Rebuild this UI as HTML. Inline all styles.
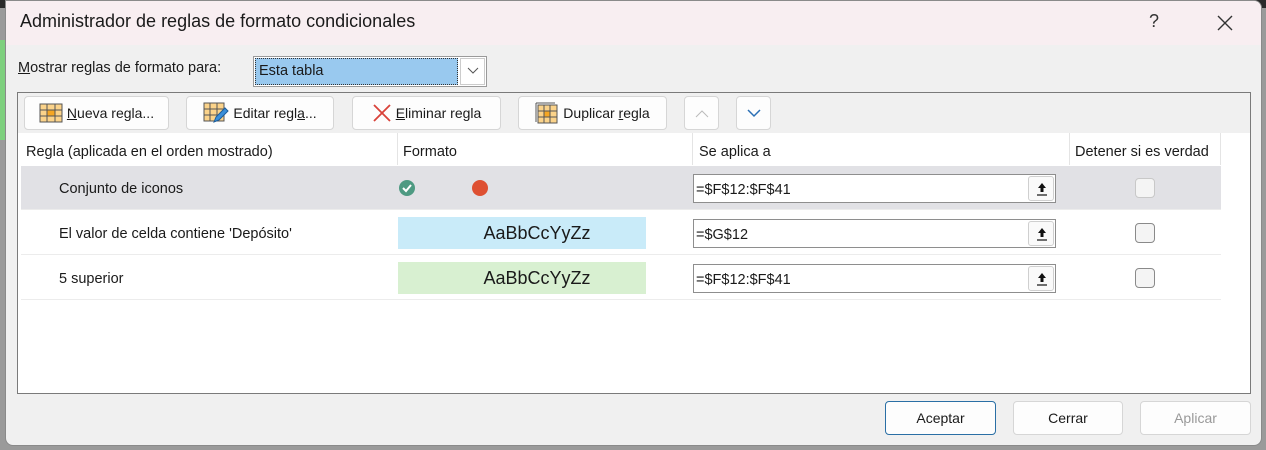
<!DOCTYPE html>
<html><head><meta charset="utf-8"><style>
*{box-sizing:border-box;margin:0;padding:0}
body{width:1266px;height:450px;overflow:hidden;background:#9a9a9a;font-family:"Liberation Sans",sans-serif;font-size:14px;color:#1a1a1a;position:relative}
.a{position:absolute}
.dlg{left:5px;top:0;width:1257px;height:446px;background:#f0f0f0;border:1px solid #8a8a8a;border-radius:0 8px 8px 8px;overflow:hidden}
.title{left:0;top:0;width:100%;height:44px;background:#f8eef1}
.btn{position:absolute;background:#fdfdfd;border:1px solid #d6d6d6;border-radius:4px;display:flex;align-items:center;justify-content:center;gap:4px;font-size:14px}
.row{position:absolute;left:3px;width:1200px;height:44px;border-bottom:1px solid #ececec}
.cell{position:absolute;top:1px;line-height:44px}
.inp{position:absolute;left:672px;top:8px;width:363px;height:29px;background:#fff;border:1px solid #8e8e8e;font-size:14.5px;line-height:30px;padding-left:2px}
.up{position:absolute;right:1px;top:1px;width:26px;height:25px;border:1px solid #cfcfcf;border-radius:3px;background:#fafafa}
.up svg{position:absolute;left:7px;top:5px}
.cb{position:absolute;left:1114px;top:12px;width:20px;height:20px;border:1px solid #8a8a8a;border-radius:4px;background:#f4f4f4}
.sw{position:absolute;left:377px;top:6px;width:248px;height:32px;font-size:18px;text-align:center;line-height:32px;padding-left:30px}
u{text-decoration:underline}
</style></head><body>
<div class="a" style="left:0;top:0;width:1266px;height:8px;background:#2a2a2a"></div>
<div class="a" style="left:0;top:40px;width:5px;height:100px;background:#7ed07e"></div>
<div class="a dlg">
 <div class="a title"></div>
 <div class="a" style="left:14px;top:10px;font-size:18px">Administrador de reglas de formato condicionales</div>
 <div class="a" style="left:1143px;top:10px;font-size:18px;color:#333">?</div>
 <svg class="a" style="left:1210px;top:13px" width="18" height="18"><path d="M2 2L16 16M16 2L2 16" stroke="#333" stroke-width="1.4"/></svg>
 <div class="a" style="left:12px;top:59px;font-size:14.5px"><u>M</u>ostrar reglas de formato para:</div>
 <div class="a" style="left:247px;top:55px;width:234px;height:31px;background:#fff;border:1px solid #9a9a9a"></div>
 <div class="a" style="left:249px;top:57px;width:203px;height:27px;background:#99c9ef;border:1px dotted #333;font-size:14.5px;line-height:25px;padding-left:3px">Esta tabla</div>
 <div class="a" style="left:454px;top:57px;width:25px;height:27px;border:1px solid #ccc;background:#fff"></div>
 <svg class="a" style="left:461px;top:66px" width="12" height="8"><path d="M1 1L6 6L11 1" stroke="#555" fill="none"/></svg>
 <div class="a" style="left:11px;top:91px;width:1234px;height:302px;border:1px solid #7a7a7a;background:#f0f0f0"></div>
 <div class="btn" style="left:18px;top:95px;width:145px;height:34px">
  <svg width="24" height="20"><rect x="1" y="1" width="22" height="18" fill="#fbd38a" stroke="#555"/><rect x="8" y="7" width="8" height="6" fill="#f5a623"/><path d="M8 1V19M16 1V19M1 7H23M1 13H23" stroke="#555"/></svg><span><u>N</u>ueva regla...</span></div>
 <div class="btn" style="left:180px;top:95px;width:148px;height:34px">
  <svg width="26" height="22"><rect x="1" y="1" width="20" height="18" fill="#fbd38a" stroke="#555"/><path d="M7 1V19M14 1V19M1 7H21M1 13H21" stroke="#555"/><path d="M11 20L13 15L22 6L25 9L16 18Z" fill="#3b8fd9" stroke="#1c5c99"/></svg><span>Editar regl<u>a</u>...</span></div>
 <div class="btn" style="left:346px;top:95px;width:149px;height:34px">
  <svg width="20" height="20"><path d="M2 2L18 18M18 2L2 18" stroke="#d9423a" stroke-width="1.8"/></svg><span><u>E</u>liminar regla</span></div>
 <div class="btn" style="left:512px;top:95px;width:149px;height:34px">
  <svg width="24" height="22"><rect x="3" y="3" width="19" height="18" fill="#fbd38a" stroke="#555"/><rect x="9" y="9" width="6" height="6" fill="#f5a623"/><path d="M9 3V21M15 3V21M3 9H22M3 15H22M1 1V20M1 1H20" stroke="#555"/></svg><span>Duplicar <u>r</u>egla</span></div>
 <div class="btn" style="left:678px;top:95px;width:35px;height:34px"><svg width="14" height="9"><path d="M1 8L7 2L13 8" stroke="#bbb" fill="none"/></svg></div>
 <div class="btn" style="left:730px;top:95px;width:35px;height:34px"><svg width="14" height="9"><path d="M1 1L7 7L13 1" stroke="#2a6fb5" stroke-width="1.5" fill="none"/></svg></div>
 <div class="a" style="left:12px;top:132px;width:1232px;height:260px;background:#fff">
  <div class="a" style="left:8px;top:11px;font-size:14.5px">Regla (aplicada en el orden mostrado)</div>
  <div class="a" style="left:379px;top:0;width:1px;height:32px;background:#e4e4e4"></div>
  <div class="a" style="left:385px;top:11px;font-size:14.5px">Formato</div>
  <div class="a" style="left:674px;top:0;width:1px;height:32px;background:#e4e4e4"></div>
  <div class="a" style="left:681px;top:11px;font-size:14.5px">Se aplica a</div>
  <div class="a" style="left:1051px;top:0;width:1px;height:32px;background:#e4e4e4"></div>
  <div class="a" style="left:1057px;top:11px;font-size:14.5px">Detener si es verdad</div>
  <div class="a" style="left:1202px;top:0;width:1px;height:32px;background:#e4e4e4"></div>
  <div class="row" style="top:33px;background:#e1e1e5">
   <div class="cell" style="left:38px;font-size:14.5px">Conjunto de iconos</div>
   <svg class="a" style="left:377px;top:13px" width="18" height="18"><circle cx="9" cy="9" r="8" fill="#4e9a82"/><path d="M5 9L8 12L13 6" stroke="#fff" stroke-width="2" fill="none"/></svg>
   <svg class="a" style="left:450px;top:13px" width="18" height="18"><circle cx="9" cy="9" r="8" fill="#de5032"/></svg>
   <div class="inp">=$F$12:$F$41<div class="up"><svg width="12" height="14"><path d="M6 1L10 6H7.5V10H4.5V6H2Z" fill="#111"/><path d="M1 13H11" stroke="#111" stroke-width="1.2"/></svg></div></div>
   <div class="cb" style="border-color:#c8c8c8"></div>
  </div>
  <div class="row" style="top:78px">
   <div class="cell" style="left:38px;font-size:14.5px">El valor de celda contiene 'Depósito'</div>
   <div class="sw" style="background:#c9ebf9">AaBbCcYyZz</div>
   <div class="inp">=$G$12<div class="up"><svg width="12" height="14"><path d="M6 1L10 6H7.5V10H4.5V6H2Z" fill="#111"/><path d="M1 13H11" stroke="#111" stroke-width="1.2"/></svg></div></div>
   <div class="cb"></div>
  </div>
  <div class="row" style="top:123px">
   <div class="cell" style="left:38px;font-size:14.5px">5 superior</div>
   <div class="sw" style="background:#d8f0d1">AaBbCcYyZz</div>
   <div class="inp">=$F$12:$F$41<div class="up"><svg width="12" height="14"><path d="M6 1L10 6H7.5V10H4.5V6H2Z" fill="#111"/><path d="M1 13H11" stroke="#111" stroke-width="1.2"/></svg></div></div>
   <div class="cb"></div>
  </div>
 </div>
 <div class="btn" style="left:879px;top:400px;width:111px;height:34px;border-color:#2a6fa5">Aceptar</div>
 <div class="btn" style="left:1007px;top:400px;width:110px;height:34px">Cerrar</div>
 <div class="btn" style="left:1134px;top:400px;width:111px;height:34px;color:#999">Aplicar</div>
</div>
</body></html>
